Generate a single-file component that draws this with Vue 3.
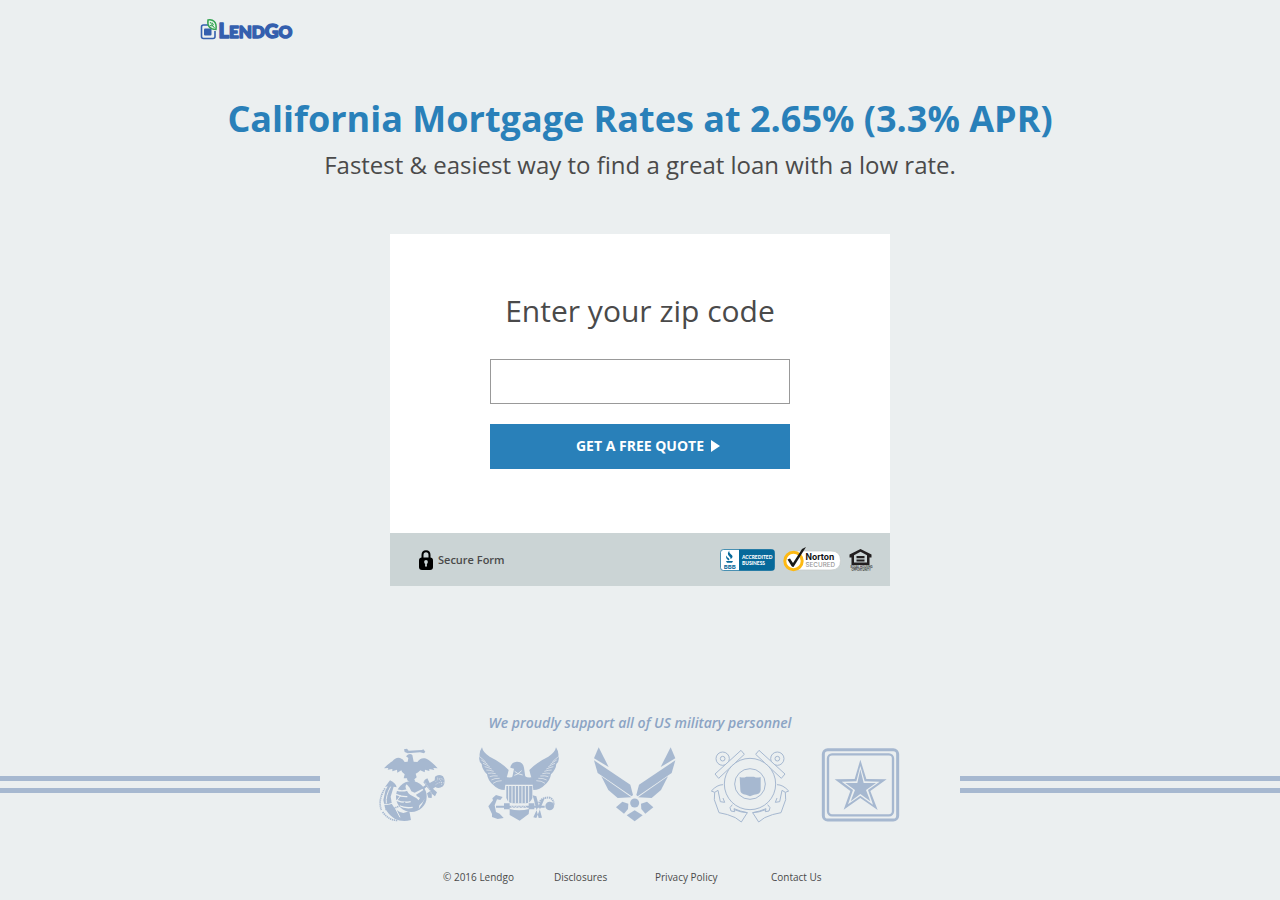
<script setup>
import { ref } from 'vue'

const zip = ref('')
const stripes = Array.from({ length: 7 }, (_, i) => 116 + i * 10)
const feathers = Array.from({ length: 9 }, (_, i) => i)
</script>

<template>
  <div class="page">
    <header class="top">
      <a href="#" class="brand" aria-label="LendGo home">
        <svg width="96" height="28" viewBox="0 0 96 28">
          <path d="M8 7H3.500Q1.500 7 1.500 9V18.500Q1.500 20.500 3.500 20.500H13Q15 20.500 15 18.500V13" fill="none" stroke="#345fae" stroke-width="1.600" />
          <rect x="4" y="10.500" width="7.500" height="7" rx="1" fill="#345fae" />
          <path d="M8 2C13 1 17 4 16 11.500C10 11.500 7 8 8 2Z" fill="#e4f3e8" stroke="#34a351" stroke-width="1.500" />
          <path d="M10 4L14.500 10M10 7.500L13 8M12 4.500L13.500 7" stroke="#34a351" fill="none" />
          <text x="18.500" y="20" class="wordmark"><tspan font-size="20">L</tspan><tspan font-size="17">END</tspan><tspan font-size="19">G</tspan><tspan font-size="17">O</tspan></text>
        </svg>
      </a>
    </header>

    <main>
      <h1>California Mortgage Rates at 2.65% (3.3% APR)</h1>
      <p class="lead">Fastest &amp; easiest way to find a great loan with a low rate.</p>

      <section class="card">
        <form class="quote" @submit.prevent>
          <label for="zip">Enter your zip code</label>
          <input id="zip" v-model="zip" type="text" inputmode="numeric" autocomplete="postal-code" />
          <button type="submit">
            <span>GET A FREE QUOTE</span>
            <svg width="9" height="12" viewBox="0 0 9 12"><path d="M0 0L9 6L0 12Z" fill="#fff" /></svg>
          </button>
        </form>
        <div class="trust">
          <div class="secure">
            <svg width="14" height="20" viewBox="0 0 14 20">
              <path d="M3.500 9V5Q3.500 1.200 7 1.200Q10.500 1.200 10.500 5V9" fill="none" stroke="#000" stroke-width="2" />
              <rect y="7.500" width="14" height="12.500" rx="3" fill="#000" />
              <circle cx="7" cy="12" r="1.900" fill="#cbd4d5" />
              <path d="M6.300 12H7.700L8 16.500H6Z" fill="#cbd4d5" />
            </svg>
            <span>Secure Form</span>
          </div>
          <div class="badges">
            <svg width="55" height="22" viewBox="0 0 55 22" role="img" aria-label="BBB Accredited Business">
              <rect x="0.500" y="0.500" width="54" height="21" rx="3" fill="#fff" stroke="#06699a" stroke-width="0.700" />
              <path d="M19 0.500H52Q54.500 0.500 54.500 3V19Q54.500 21.500 52 21.500H19Z" fill="#06699a" />
              <path d="M9.500 1.500C8 4.500 13 5.500 12.500 8Q12 9.500 10.500 10Q11 8.500 9 7Q6.500 4.500 9.500 1.500ZM6.500 6.500Q7 8.500 8.500 9Q10 10 9 11.500Q5 9.500 6.500 6.500ZM6 12H13L12 13.800H7Z" fill="#06699a" />
              <text x="3.800" y="19.500" class="bbb" font-size="6" fill="#06699a">BBB</text>
              <text x="22" y="10" class="accredited" font-size="4.900" fill="#fff">ACCREDITED</text>
              <text x="22" y="15.500" class="accredited" font-size="4.900" fill="#fff">BUSINESS</text>
            </svg>
            <svg width="58" height="26" viewBox="0 0 58 26" role="img" aria-label="Norton Secured">
              <path d="M11 4H48Q57.500 4 57.500 13.500Q57.500 23 48 23H11Z" fill="#fff" stroke="#c4c8c8" stroke-width="0.700" />
              <circle cx="10.500" cy="14" r="8.700" fill="#fff" stroke="#fdb913" stroke-width="3" />
              <path d="M4.500 12.500L7 11.500L10 16L19 2L23 0L20.500 4L10.500 20Q9 20 8.500 19Z" fill="#191919" />
              <text x="22.500" y="12.500" class="norton" font-size="8.500" fill="#111">Norton</text>
              <text x="22.500" y="20" class="secured" font-size="6.300" fill="#999">SECURED</text>
            </svg>
            <svg width="24" height="24" viewBox="0 0 24 24" role="img" aria-label="Equal Housing Opportunity">
              <path d="M11.500 1L22.500 6.500V9.500H20.500V17H2.500V9.500H0.500V6.500ZM11.500 3.800L5 7.300V14.500H18V7.300Z" fill="#231f20" fill-rule="evenodd" />
              <path d="M7.500 8H15.500V10.200H7.500ZM7.500 11.500H15.500V13.500H7.500Z" fill="#231f20" />
              <text x="1.500" y="20" font-size="2.700" class="housing" fill="#333">EQUAL HOUSING</text>
              <text x="2.500" y="22.500" font-size="2.700" class="housing" fill="#333">OPPORTUNITY</text>
            </svg>
          </div>
        </div>
      </section>
    </main>

    <section class="support">
      <p>We proudly support all of US military personnel</p>
      <div class="band">
        <div class="bars"></div>
        <div class="emblems">
          <!-- Marine Corps -->
          <svg width="68" height="78" viewBox="27 18 204 234" fill="#a6b8d0" stroke="none">
            <path d="M102 28L111 26L116 32L156 30L160 28L166 35L162 40L150 37L113 40L104 36Z" />
            <path d="M108 49Q118 38 127 45L131 65L142 66Q151 52 165 55Q181 60 203 85L190 84L193 90L178 87L178 93L165 89L164 97L151 91Q145 98 137 101L140 112L133 118L136 125L120 127L112 121L111 115L101 115L104 103Q95 98 94 91L82 98L81 89L67 94L67 87L53 89L55 84L42 85Q52 73 67 64Q77 51 90 54Q100 57 104 66L113 65L115 54Z" />
            <circle cx="124" cy="170" r="46" />
            <g fill="none" stroke="#ebeff0" stroke-width="4">
              <path d="M80 150Q96 155 112 150M78 163Q94 171 112 170M80 181Q100 190 122 185M88 197Q106 206 128 202" />
            </g>
            <path d="M110 133Q103 140 110 150Q114 162 126 167Q140 173 146 181L150 174L141 169L138 164L148 158L160 150L158 146L146 152L134 158L124 154L119 143Z" fill="#ebeff0" />
            <path d="M164 176Q157 194 146 207L148 196L158 186Z" fill="#ebeff0" />
            <path d="M60 121Q78 130 80 142L71 140L62 170L66 193Q78 216 100 219L118 214L123 240Q96 247 74 236Q53 222 45 203L40 180L46 152L53 139L45 141Z" />
            <path d="M62 140Q46 168 49 190M38 193Q75 198 92 166M66 185L90 232" fill="none" stroke="#ebeff0" stroke-width="3" />
            <path d="M45 145Q23 180 34 210M38 216Q58 243 84 241M46 208Q82 207 106 186" fill="none" stroke="#a6b8d0" stroke-width="5" stroke-dasharray="4 2" />
            <path d="M160 127Q163 118 172 115L179 129L194 121L195 110Q206 100 219 109Q229 125 219 139Q206 148 196 141L189 146L201 157L195 169L186 162L185 174L175 173L171 160L181 153L170 140L160 149L155 143L167 135Z" />
            <path d="M201 114Q216 118 215 138M197 125Q209 110 221 120M197 134Q209 124 222 129M163 125Q178 143 188 170" fill="none" stroke="#ebeff0" stroke-width="2" stroke-dasharray="3 3" />
          </svg>
          <!-- Navy -->
          <svg width="82" height="78" viewBox="27 18 246 234" fill="#a6b8d0" stroke="none">
            <g v-for="side in 2" :key="side" :transform="side === 2 ? 'translate(294 0) scale(-1 1)' : null">
              <path d="M36 22Q39 38 59 50Q91 65 116 90Q112 109 108 117L104 150Q84 150 70 135Q54 123 51 103Q36 88 35 72Q24 61 29 48Q27 36 36 22Z" />
              <path v-for="i in feathers" :key="i" :d="`M${29 + i * 5} ${50 + i * 10}Q${39 + i * 5} ${58 + i * 8} ${47 + i * 6} ${66 + i * 7}`" fill="none" stroke="#ebeff0" stroke-width="2" />
            </g>
            <path d="M122 78Q126 66 140 65Q158 64 162 83L166 111H127L132 86L121 83Z" />
            <path d="M134 94L144 101M155 92L144 101L158 105M133 106L145 101" stroke="#ebeff0" stroke-width="2.500" fill="none" />
            <path d="M104 109Q120 116 130 109H165Q178 116 191 109L191 134H104Z" />
            <path d="M109 138H187V174Q181 190 167 190H128Q114 190 109 174Z" />
            <path v-for="x in stripes" :key="x" :d="`M${x} 138V190`" stroke="#ebeff0" stroke-width="3" />
            <path d="M78 197H224V203H78ZM102 190H119V208H102ZM176 190H193V208H176ZM119 207Q147 215 178 207L176 222L149 242L119 225Z" />
            <path d="M122 196L127 204L132 196L137 204L142 196L147 204L153 196L158 204L164 196L170 204" fill="none" stroke="#ebeff0" stroke-width="2" />
            <path d="M55 199L69 181L67 175L78 165L98 171L91 180L81 178L74 196L78 216L89 221L101 234L83 237L66 231L66 222Z" />
            <path d="M188 166L199 169L216 233L206 234ZM224 175L215 178L190 232L199 234Z" />
            <circle cx="239" cy="198" r="13" />
            <path d="M207 189Q215 171 239 173Q254 180 250 198" fill="none" stroke="#a6b8d0" stroke-width="6" stroke-dasharray="4 2" />
          </svg>
          <!-- Air Force -->
          <svg width="84" height="78" viewBox="24 18 252 234" fill="#a6b8d0">
            <g v-for="side in 2" :key="side" :transform="side === 2 ? 'translate(298 0) scale(-1 1)' : null">
              <path d="M41 22L71 81L27 55Z" />
              <path d="M27 61L136 134L144 165L140 169L38 99Z" />
              <path d="M49 109L139 172L98 174L70 150Z" />
              <path d="M93 202L112 185L130 191L129 207L117 221Z" />
            </g>
            <circle cx="149" cy="189" r="13.500" />
            <path d="M149 211L173 226L149 244L125 226Z" />
          </svg>
          <!-- Coast Guard -->
          <svg width="80" height="78" viewBox="27 18 240 234" fill="none" stroke="#a6b8d0" stroke-width="3">
            <g v-for="side in 2" :key="side" :transform="side === 2 ? 'translate(300 0) scale(-1 1)' : null">
              <circle cx="68" cy="56" r="20" />
              <circle cx="68" cy="56" r="7" />
              <path d="M123 31L133 43L56 115L45 102Z" fill="#ebeff0" />
              <path d="M69 134Q51 134 34 153L44 157L43 179L57 218Q83 222 106 233L124 246L142 218Q120 214 102 206L104 215L93 213L90 203L97 194M44 157L54 151L61 185L74 187L69 174M103 209Q125 218 142 218" />
            </g>
            <circle cx="150" cy="132" r="77" fill="#ebeff0" />
            <circle cx="150" cy="132" r="46" />
            <path d="M119 111Q130 115 139 110H162Q171 115 182 111V150Q181 164 162 164L150 169L138 164Q121 163 121 150Z" fill="#a6b8d0" stroke="none" />
          </svg>
          <!-- Army -->
          <svg width="78" height="78" viewBox="33 18 234 234" fill="none" stroke="#a6b8d0">
            <rect x="40" y="29" width="223" height="211" rx="13" stroke-width="9" />
            <rect x="54" y="43" width="195" height="183" rx="12" stroke-width="7" />
            <path d="M151 59L169 117L230 118L181 153L203 210L151 174L101 209L121 153L74 118L134 117ZM151 78L139 124L95 125L129 150L114 193L151 167L189 194L174 150L209 125L164 124Z" fill="#a6b8d0" fill-rule="evenodd" stroke="none" />
            <path d="M151 88L161 129L198 129L168 150L181 184L151 162L122 184L135 150L106 129L142 129Z" fill="#a6b8d0" stroke="none" />
          </svg>
        </div>
        <div class="bars"></div>
      </div>
    </section>

    <footer>
      <span>© 2016 Lendgo</span>
      <a href="#">Disclosures</a>
      <a href="#">Privacy Policy</a>
      <a href="#">Contact Us</a>
    </footer>
  </div>
</template>

<style>
body {
  margin: 0;
  background: #ebeff0;
}
</style>

<style scoped>
.page {
  font-family: "Open Sans", "Noto Sans", sans-serif;
  color: #4a4a4a;
}
svg {
  display: block;
  flex: none;
  overflow: visible;
}
.top {
  max-width: 880px;
  margin: 0 auto;
  padding-top: 18px;
}
.brand {
  display: inline-block;
  vertical-align: top;
}
.wordmark {
  font-family: Lato, sans-serif;
  font-weight: 900;
  fill: #345fae;
  stroke: #345fae;
  stroke-width: 1.5px;
  stroke-linejoin: round;
}
h1 {
  margin: 48px 0 0;
  text-align: center;
  font-size: 36px;
  line-height: 50px;
  font-weight: 700;
  color: #2980b9;
}
.lead {
  margin: 4px 0 0;
  text-align: center;
  font-size: 24px;
  line-height: 34px;
}
.card {
  max-width: 500px;
  margin: 52px auto 0;
  background: #fff;
}
.quote {
  max-width: 300px;
  margin: 0 auto;
  padding: 56px 0 64px;
  display: flex;
  flex-direction: column;
}
.quote label {
  text-align: center;
  font-size: 30px;
  line-height: 42px;
  margin-bottom: 27px;
}
.quote input {
  box-sizing: border-box;
  width: 100%;
  height: 45px;
  margin: 0 0 20px;
  padding: 0 12px;
  border: 1px solid #999;
  border-radius: 0;
  background: #fff;
  font: inherit;
  font-size: 18px;
}
.quote button {
  display: flex;
  align-items: center;
  justify-content: center;
  gap: 7px;
  height: 45px;
  padding: 0 0 2px 16px;
  border: 0;
  background: #2980b9;
  color: #fff;
  font-family: inherit;
  font-size: 14px;
  font-weight: 700;
}
.trust {
  display: flex;
  align-items: center;
  justify-content: space-between;
  height: 53px;
  padding: 0 17px 0 29px;
  background: #cbd4d5;
}
.secure {
  display: flex;
  align-items: center;
  gap: 5px;
  font-size: 11px;
  font-weight: 600;
}
.badges {
  display: flex;
  align-items: center;
  gap: 8px;
}
.bbb,
.accredited {
  font-family: Lato, sans-serif;
  font-weight: 900;
}
.housing {
  font-family: Lato, sans-serif;
  font-weight: 700;
}
.norton {
  font-family: Inter, sans-serif;
  font-weight: 700;
}
.secured {
  font-family: Inter, sans-serif;
  font-weight: 500;
}
.support {
  margin-top: 126px;
}
.support p {
  margin: 0 0 12px;
  text-align: center;
  font-size: 14px;
  line-height: 22px;
  font-style: italic;
  font-weight: 600;
  color: #8ba4c4;
}
.band {
  display: grid;
  grid-template-columns: 1fr 2fr 1fr;
  align-items: center;
}
.bars {
  height: 7px;
  margin-bottom: 2px;
  border-top: 5px solid #a6b8d0;
  border-bottom: 5px solid #a6b8d0;
}
.emblems {
  display: flex;
  justify-content: center;
  gap: 32px;
  padding-right: 2px;
}
footer {
  display: grid;
  grid-template-columns: 111px 101px 116px 66px;
  justify-content: center;
  margin-top: 46px;
  padding-bottom: 16px;
  font-size: 10px;
  line-height: 14px;
}
footer a {
  color: inherit;
  text-decoration: none;
}
</style>
